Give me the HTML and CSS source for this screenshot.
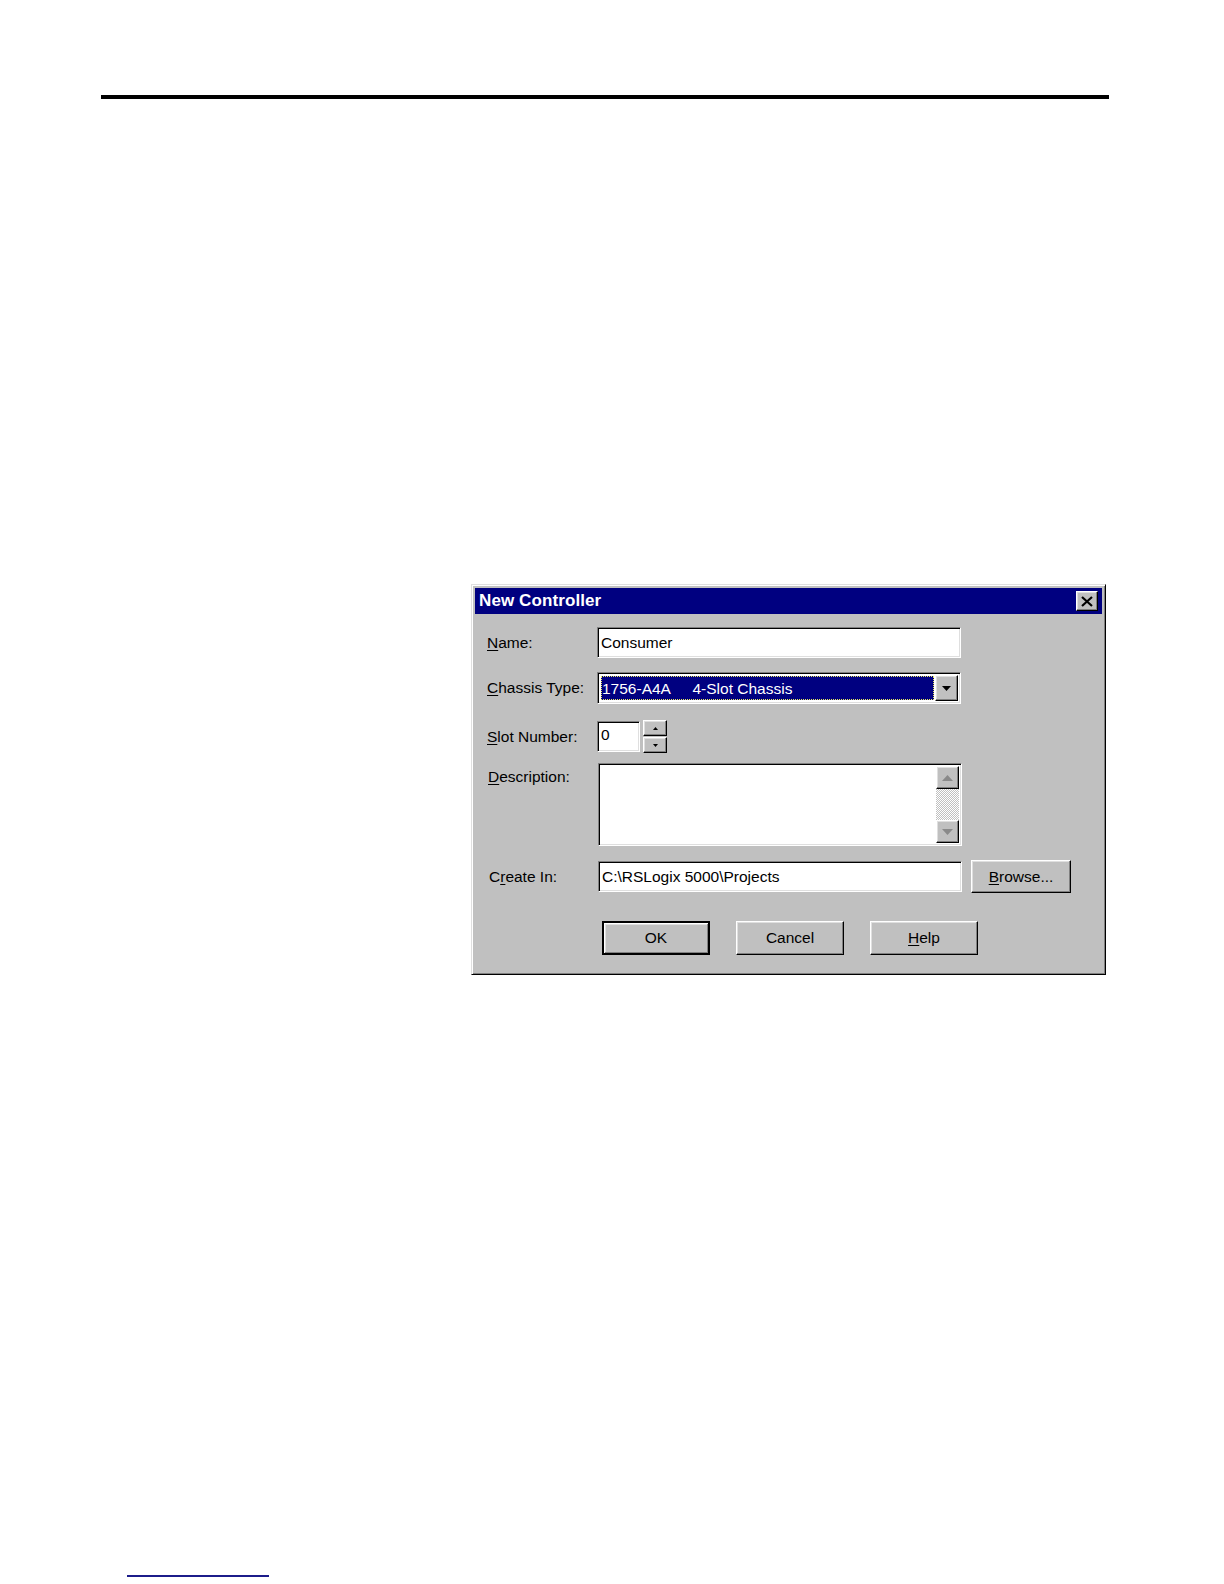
FILE: index.html
```html
<!DOCTYPE html>
<html>
<head>
<meta charset="utf-8">
<link rel="stylesheet" href="styles.css">
</head>
<body>
<div class="page">
  <div class="top-rule"></div>

  <div class="dialog">
    <div class="titlebar">
      <span class="title">New Controller</span>
      <div class="close-btn">
        <svg width="12" height="11" viewBox="0 0 12 11"><path d="M1 1 L11 10 M11 1 L1 10" stroke="#000" stroke-width="2.2" fill="none"/></svg>
      </div>
    </div>

    <div class="content">
      <div class="row row-name">
        <label class="lbl"><u>N</u>ame:</label>
        <div class="field text-field w-main">Consumer</div>
      </div>

      <div class="row row-chassis">
        <label class="lbl"><u>C</u>hassis Type:</label>
        <div class="field combo w-main">
          <div class="combo-value"><span>1756-A4A&nbsp;&nbsp;&nbsp;&nbsp;&nbsp;4-Slot Chassis</span></div>
          <div class="raised drop-btn">
            <svg width="9" height="5" viewBox="0 0 9 5"><path d="M0 0 H9 L4.5 5 Z" fill="#000"/></svg>
          </div>
        </div>
      </div>

      <div class="row row-slot">
        <label class="lbl"><u>S</u>lot Number:</label>
        <div class="field text-field slot-field">0</div>
        <div class="spinner">
          <div class="raised spin-btn">
            <svg width="5" height="3" viewBox="0 0 5 3"><path d="M0 3 H5 L2.5 0 Z" fill="#000"/></svg>
          </div>
          <div class="raised spin-btn">
            <svg width="5" height="3" viewBox="0 0 5 3"><path d="M0 0 H5 L2.5 3 Z" fill="#000"/></svg>
          </div>
        </div>
      </div>

      <div class="row row-desc">
        <label class="lbl lbl-top"><u>D</u>escription:</label>
        <div class="field desc-field w-main">
          <div class="desc-text"></div>
          <div class="scrollbar">
            <div class="raised scroll-btn">
              <svg width="11" height="6" viewBox="0 0 11 6"><path d="M0 6 H11 L5.5 0 Z" fill="#8a8a8a"/></svg>
            </div>
            <div class="scroll-track"></div>
            <div class="raised scroll-btn">
              <svg width="11" height="6" viewBox="0 0 11 6"><path d="M0 0 H11 L5.5 6 Z" fill="#8a8a8a"/></svg>
            </div>
          </div>
        </div>
      </div>

      <div class="row row-create">
        <label class="lbl">C<u>r</u>eate In:</label>
        <div class="field text-field w-main">C:\RSLogix 5000\Projects</div>
        <div class="raised button browse"><span><u>B</u>rowse...</span></div>
      </div>

      <div class="row row-buttons">
        <div class="raised button default"><span>OK</span></div>
        <div class="raised button"><span>Cancel</span></div>
        <div class="raised button"><span><u>H</u>elp</span></div>
      </div>
    </div>
  </div>

  <div class="foot-rule"></div>
</div>
</body>
</html>
```

FILE: styles.css
```css
* {
  box-sizing: border-box;
}

html, body {
  margin: 0;
  padding: 0;
  background: #ffffff;
}

body {
  font-family: "Liberation Sans", Arial, sans-serif;
  font-size: 15.5px;
  color: #000;
}

.page {
  padding-top: 95px;
  padding-bottom: 4px;
}

.top-rule {
  margin-left: 101px;
  width: 1008px;
  height: 4px;
  background: #000;
}

.foot-rule {
  margin-top: 600px;
  margin-left: 127px;
  width: 142px;
  height: 2px;
  background: #1c1c8a;
}

/* ---------- dialog frame ---------- */
.dialog {
  margin-top: 485px;
  margin-left: 471px;
  width: 635px;
  height: 391px;
  background: #c0c0c0;
  border: 1px solid;
  border-color: #dfdfdf #000 #000 #dfdfdf;
  box-shadow: inset 1px 1px #ffffff, inset -1px -1px #808080;
  padding: 3px;
}

.titlebar {
  height: 26px;
  background: #000080;
  display: flex;
  align-items: center;
  justify-content: space-between;
  padding: 0 4px 0 4px;
}

.title {
  color: #fff;
  font-weight: bold;
  font-size: 17px;
  letter-spacing: 0.1px;
}

.raised {
  background: #c0c0c0;
  border: 1px solid;
  border-color: #ffffff #000 #000 #ffffff;
  box-shadow: inset -1px -1px #808080, inset 1px 1px #dfdfdf;
}

.close-btn {
  width: 22px;
  height: 20px;
  background: #c0c0c0;
  border: 1px solid;
  border-color: #ffffff #000 #000 #ffffff;
  box-shadow: inset -1px -1px #808080, inset 1px 1px #dfdfdf;
  display: flex;
  align-items: center;
  justify-content: center;
}

/* ---------- content ---------- */
.content {
  padding-left: 12px;
}

.row {
  display: flex;
  align-items: center;
}

.lbl {
  width: 110px;
  flex: none;
  line-height: 18px;
}

.lbl-top {
  align-self: flex-start;
  padding-top: 5px;
}

.row-name { margin-top: 13px; height: 31px; }
.row-chassis { margin-top: 14px; height: 32px; }
.row-slot { margin-top: 16px; height: 33px; }
.row-desc { margin-top: 10px; height: 83px; align-items: stretch; }
.row-create { margin-top: 14px; height: 33px; }
.row-buttons { margin-top: 28px; height: 34px; padding-left: 115px; gap: 26px; }

.row-desc .lbl,
.row-create .lbl {
  margin-left: 1px;
  width: 110px;
}

.row-create .lbl {
  margin-left: 2px;
  width: 109px;
}

.field {
  background: #fff;
  border: 1px solid;
  border-color: #808080 #ffffff #ffffff #808080;
  box-shadow: inset 1px 1px #000, inset -1px -1px #dfdfdf;
}

.w-main {
  width: 364px;
}

.text-field {
  height: 31px;
  padding: 2px 4px 2px 3px;
  display: flex;
  align-items: center;
  line-height: 18px;
}

/* combo */
.combo {
  height: 32px;
  display: flex;
  padding: 2px;
  align-items: stretch;
}

.combo-value {
  flex: 1;
  background: #000080;
  color: #fff;
  margin: 1px;
  border: 1px dotted #e8e860;
  display: flex;
  align-items: center;
  padding-left: 0;
  padding-top: 1px;
}

.drop-btn {
  width: 23px;
  flex: none;
  display: flex;
  align-items: center;
  justify-content: center;
}

/* slot */
.slot-field {
  width: 43px;
  height: 31px;
  align-items: flex-start;
  padding-top: 4px;
}

.spinner {
  margin-left: 3px;
  width: 24px;
  height: 33px;
  display: flex;
  flex-direction: column;
  gap: 1px;
}

.spin-btn {
  flex: 1;
  display: flex;
  align-items: center;
  justify-content: center;
}

/* description */
.desc-field {
  height: 83px;
  display: flex;
  padding: 2px;
}

.desc-text {
  flex: 1;
}

.scrollbar {
  width: 23px;
  display: flex;
  flex-direction: column;
}

.scroll-btn {
  height: 23px;
  display: flex;
  align-items: center;
  justify-content: center;
}

.scroll-track {
  flex: 1;
  background-color: #c0c0c0;
  background-image: repeating-conic-gradient(#ffffff 0 25%, #c0c0c0 0 50%);
  background-size: 2px 2px;
}

/* buttons */
.button {
  width: 108px;
  height: 34px;
  display: flex;
  align-items: center;
  justify-content: center;
  line-height: 18px;
}

.button.default {
  border: 2px solid #000;
  box-shadow: inset 1px 1px #ffffff, inset -1px -1px #808080, inset 2px 2px #dfdfdf;
}

.browse {
  margin-left: 9px;
  width: 100px;
  height: 33px;
}

u {
  text-decoration: underline;
  text-underline-offset: 2px;
}
```
